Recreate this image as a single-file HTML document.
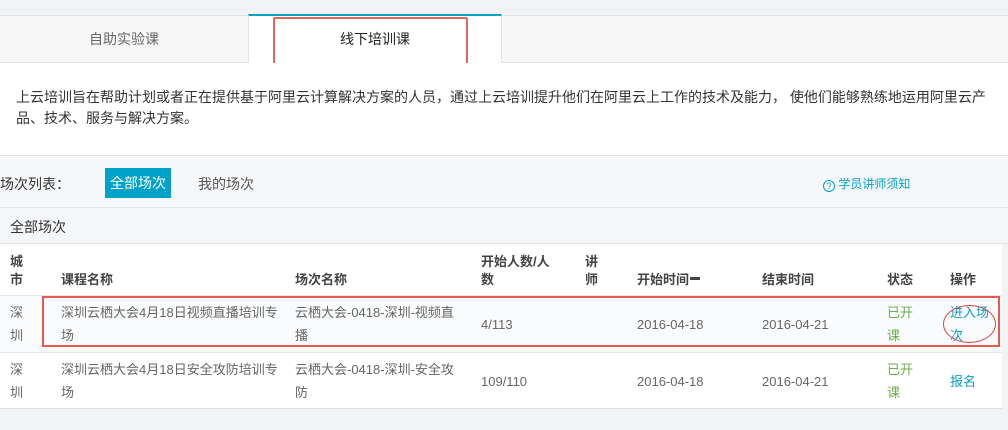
<!DOCTYPE html>
<html><head><meta charset="utf-8"><style>
*{margin:0;padding:0;box-sizing:border-box}
body{width:1008px;height:430px;background:#f2f3f5;font-family:"Liberation Sans","Noto Sans CJK SC",sans-serif;position:relative;overflow:hidden;color:#333}
.abs{position:absolute}
.tabs{left:0;top:15px;width:1008px;height:48px;background:#f7f7f7;border-top:1px solid #e3e3e3;border-bottom:1px solid #e3e3e3}
.t1{left:0;top:15px;width:248px;height:48px;line-height:48px;text-align:center;color:#666;font-size:14px}
.t2{left:248px;top:14px;width:254px;height:50px;background:#fff;border-top:2px solid #00a2ca;border-left:1px solid #e3e3e3;border-right:1px solid #e3e3e3;line-height:46px;text-align:center;font-size:14px;color:#222}
.intro{left:0;top:63px;width:1008px;height:93px;background:#fff;border-bottom:1px solid #e3e3e3;padding:24px 0 0 16px;font-size:14px;line-height:21px;color:#333}
.bar{left:0;top:156px;width:1008px;height:52px;background:#f6f7f9;border-bottom:1px solid #e3e3e3}
.lbl{left:0;top:174px;font-size:14px;color:#333}
.btn{left:105px;top:168px;width:66px;height:30px;background:#00a2ca;color:#fff;font-size:14px;line-height:30px;text-align:center}
.my{left:198px;top:174px;font-size:14px;color:#555}
.help{left:823px;top:175px;font-size:12px;color:#00a2ca}
.band{left:0;top:208px;width:1008px;height:36px;background:#f5f6f8;border-bottom:1px solid #e3e3e3;padding:9px 10px;font-size:14px}
.table{left:0;top:244px;width:1002px;height:165px;background:#fff;border-bottom:1px solid #e0e0e0}
.c{position:absolute;font-size:13px;line-height:23px;color:#666}
.h{font-weight:bold;color:#444;line-height:18px}
.row{position:absolute;left:0;width:1002px;border-top:1px solid #e8e8e8}
.g{color:#6aaf4a}.b{color:#0a9cc8}
</style></head><body>
<div class="abs tabs"></div>
<div class="abs t1">自助实验课</div>
<div class="abs t2">线下培训课</div>
<div class="abs" style="left:273px;top:17px;width:195px;height:51px;border:2px solid #e0675c;border-radius:2px"></div>
<div class="abs intro">上云培训旨在帮助计划或者正在提供基于阿里云计算解决方案的人员，通过上云培训提升他们在阿里云上工作的技术及能力， 使他们能够熟练地运用阿里云产<br>品、技术、服务与解决方案。</div>
<div class="abs bar"></div>
<div class="abs lbl">场次列表：</div>
<div class="abs btn">全部场次</div>
<div class="abs my">我的场次</div>
<div class="abs help"><span style="display:inline-block;width:12px;height:12px;border:1.3px solid #00a2ca;border-radius:50%;font-size:9px;line-height:10px;text-align:center;vertical-align:-1px">?</span> 学员讲师须知</div>
<div class="abs band">全部场次</div>
<div class="abs table">
<div class="row" style="top:51px;height:57px;background:#fafbfc"></div>
<div class="row" style="top:108px;height:57px"></div>
<div class="c h" style="left:10px;top:9px">城<br>市</div>
<div class="c h" style="left:61px;top:27px">课程名称</div>
<div class="c h" style="left:295px;top:27px">场次名称</div>
<div class="c h" style="left:481px;top:9px">开始人数/人<br>数</div>
<div class="c h" style="left:585px;top:9px">讲<br>师</div>
<div class="c h" style="left:637px;top:27px">开始时间<span style="display:inline-block;width:10px;height:3px;background:#444;vertical-align:4px;margin-left:1px"></span></div>
<div class="c h" style="left:762px;top:27px">结束时间</div>
<div class="c h" style="left:887px;top:27px">状态</div>
<div class="c h" style="left:950px;top:27px">操作</div>

<div class="c" style="left:10px;top:57px">深<br>圳</div>
<div class="c" style="left:61px;top:57px">深圳云栖大会4月18日视频直播培训专<br>场</div>
<div class="c" style="left:295px;top:57px">云栖大会-0418-深圳-视频直<br>播</div>
<div class="c" style="left:481px;top:69px">4/113</div>
<div class="c" style="left:637px;top:69px">2016-04-18</div>
<div class="c" style="left:762px;top:69px">2016-04-21</div>
<div class="c g" style="left:887px;top:57px">已开<br>课</div>
<div class="c b" style="left:950px;top:57px">进入场<br>次</div>

<div class="c" style="left:10px;top:114px">深<br>圳</div>
<div class="c" style="left:61px;top:114px">深圳云栖大会4月18日安全攻防培训专<br>场</div>
<div class="c" style="left:295px;top:114px">云栖大会-0418-深圳-安全攻<br>防</div>
<div class="c" style="left:481px;top:126px">109/110</div>
<div class="c" style="left:637px;top:126px">2016-04-18</div>
<div class="c" style="left:762px;top:126px">2016-04-21</div>
<div class="c g" style="left:887px;top:114px">已开<br>课</div>
<div class="c b" style="left:950px;top:126px">报名</div>
</div>
<div class="abs" style="left:42px;top:296px;width:958px;height:51px;border:2px solid #e8594e"></div>
<div class="abs" style="left:943px;top:305px;width:53px;height:38px;border:1.5px solid #d9433a;border-radius:50%"></div>
</body></html>
